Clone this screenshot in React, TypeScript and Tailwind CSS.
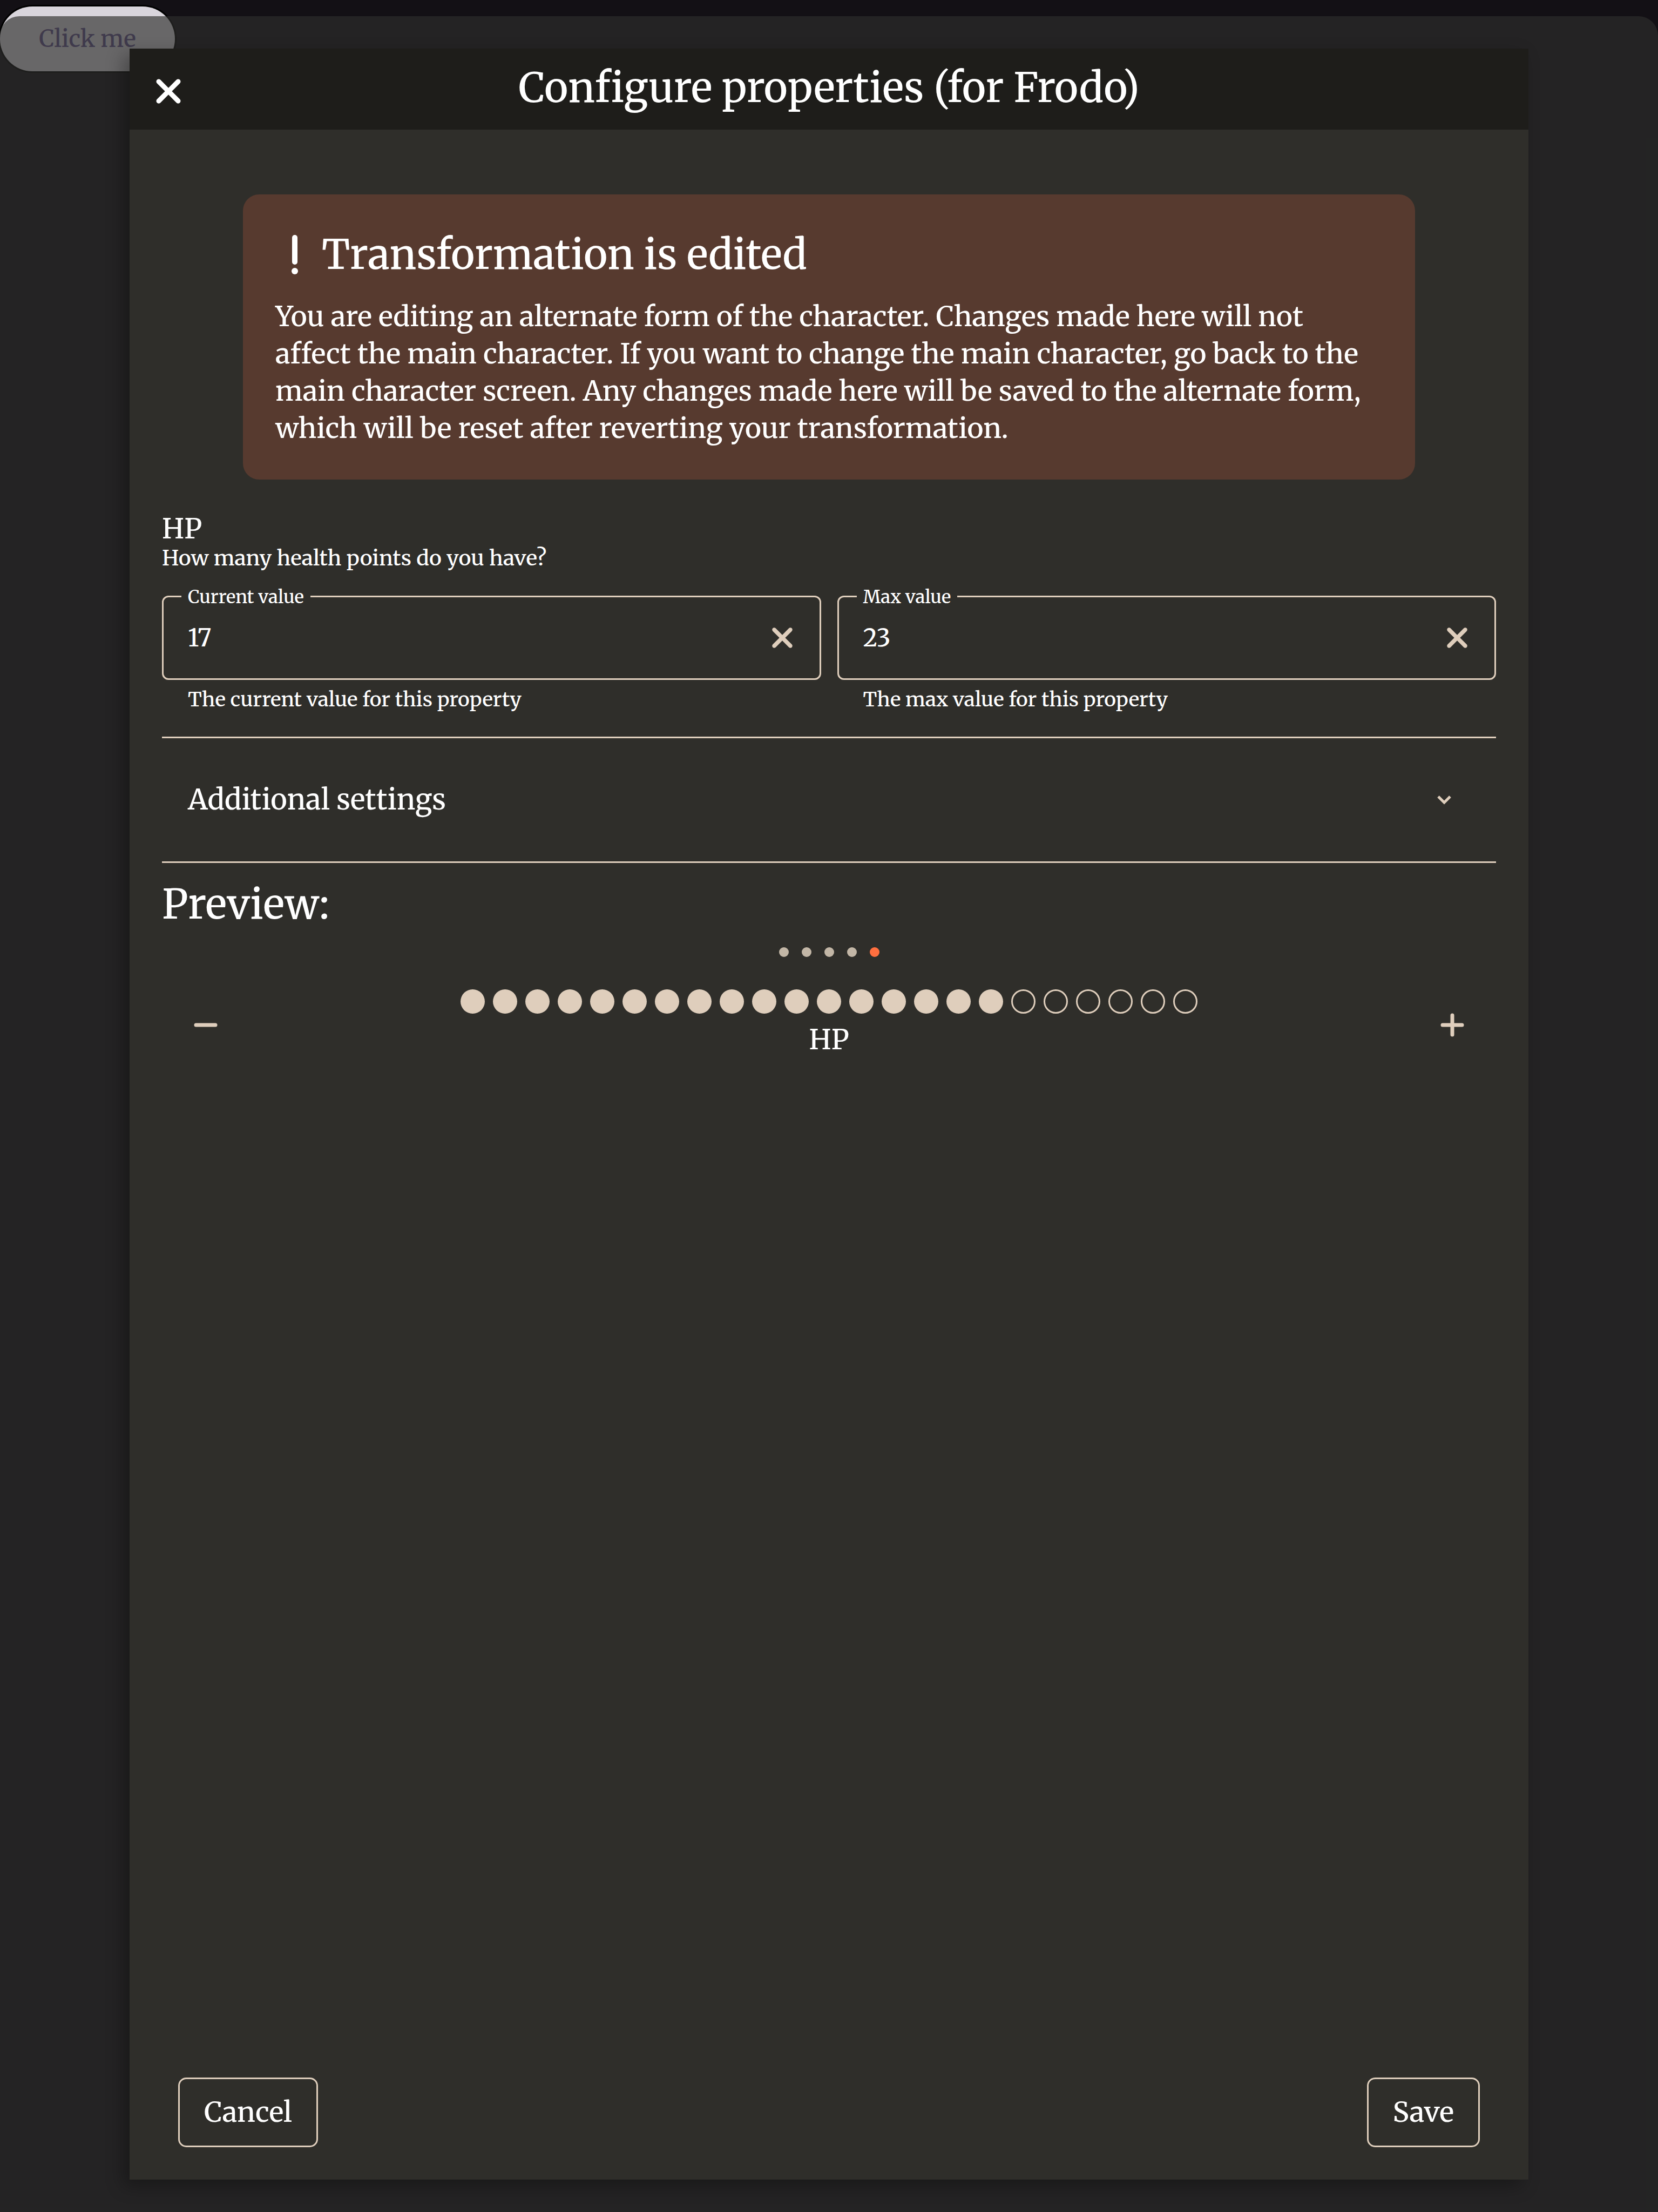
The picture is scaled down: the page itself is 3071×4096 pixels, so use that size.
import { useState } from "react";
import { FaXmark } from "react-icons/fa6";

function ExclamationIcon() {
  return (
    <svg width="12" height="73" viewBox="0 0 12 73" fill="currentColor" aria-hidden="true">
      <rect x="1" y="0" width="10" height="55" rx="5" />
      <circle cx="6" cy="67" r="6" />
    </svg>
  );
}

function ChevronDownIcon() {
  return (
    <svg width="26" height="18" viewBox="0 0 26 18" fill="none" stroke="currentColor" strokeWidth="5" aria-hidden="true">
      <path d="M2 3L13 14L24 3" />
    </svg>
  );
}

function MinusIcon() {
  return (
    <svg width="44" height="44" viewBox="0 0 44 44" stroke="currentColor" strokeWidth="7" strokeLinecap="round" aria-hidden="true">
      <path d="M4 22H40" />
    </svg>
  );
}

function PlusIcon() {
  return (
    <svg width="44" height="44" viewBox="0 0 44 44" stroke="currentColor" strokeWidth="7" strokeLinecap="round" aria-hidden="true">
      <path d="M4 22H40M22 4V40" />
    </svg>
  );
}

interface NumberFieldProps {
  id: string;
  label: string;
  helper: string;
  value: string;
  onChange: (value: string) => void;
}

function NumberField({ id, label, helper, value, onChange }: NumberFieldProps) {
  return (
    <div>
      <div className="relative flex h-[156px] items-center rounded-xl border-3 border-[#dfcebc] pr-[21px] pl-[45px]">
        <label htmlFor={id} className="absolute top-0 left-[33px] -translate-y-1/2 bg-[#2f2e2a] px-3 text-[33px] leading-[42px]">
          {label}
        </label>
        <input
          id={id}
          type="text"
          inputMode="numeric"
          aria-describedby={`${id}-helper`}
          value={value}
          onChange={(e) => onChange(e.target.value)}
          className="h-24 min-w-0 flex-1 bg-transparent text-[45px] text-white outline-none"
        />
        <button
          type="button"
          aria-label={`Clear ${label.toLowerCase()}`}
          onClick={() => onChange("")}
          className="flex size-24 shrink-0 items-center justify-center text-[60px] text-[#dfcebc]"
        >
          <FaXmark />
        </button>
      </div>
      <p id={`${id}-helper`} className="mt-3 pl-12 text-[37px] leading-[48px]">
        {helper}
      </p>
    </div>
  );
}

const pages = [0, 1, 2, 3, 4];

export default function App() {
  const [current, setCurrent] = useState("17");
  const [max, setMax] = useState("23");
  const [open, setOpen] = useState(false);
  const filled = Number(current) || 0;
  const total = Math.min(Number(max) || 0, 60);
  const step = (by: number) => setCurrent(String(Math.min(total, Math.max(0, filled + by))));

  return (
    <div className="relative min-h-screen bg-[#131015] pt-3 font-['Merriweather','Noto_Serif',serif] font-medium text-white">
      <button
        type="button"
        className="flex h-[120px] w-[324px] items-center justify-center rounded-full bg-[#d9d5dc] text-[43px] text-[#625389] ring-3 ring-black"
      >
        Click me
      </button>

      <div className="absolute inset-x-0 top-[30px] bottom-0 flex rounded-t-[36px] bg-[#2d2e2c]/66 px-60 py-15">
        <div
          role="dialog"
          aria-labelledby="dialog-title"
          className="flex flex-1 flex-col bg-[#2f2e2a] shadow-[-12px_12px_30px_rgba(0,0,0,0.3)]"
        >
          <header className="grid h-[150px] grid-cols-[96px_1fr_96px] items-center bg-[#1e1d1a] px-6">
            <button type="button" aria-label="Close" className="mt-2 flex size-24 items-center justify-center text-[72px]">
              <FaXmark />
            </button>
            <h1 id="dialog-title" className="pb-1.5 text-center text-[75px] leading-[96px]">
              Configure properties (for Frodo)
            </h1>
          </header>

          <main className="flex-1 px-15 pt-30">
            <section className="mx-[150px] rounded-[30px] bg-[#573a2f] p-15">
              <h2 className="flex items-center gap-3.5 text-[75px] leading-[102px]">
                <span className="flex w-[72px] justify-center">
                  <ExclamationIcon />
                </span>
                Transformation is edited
              </h2>
              <p className="mt-[30px] pr-6 text-[51px] leading-[69px]">
                You are editing an alternate form of the character. Changes made here will not affect the main character. If
                you want to change the main character, go back to the main character screen. Any changes made here will be
                saved to the alternate form, which will be reset after reverting your transformation.
              </p>
            </section>

            <section className="mt-15">
              <h3 className="text-[51px] leading-[62px]">HP</h3>
              <p className="text-[39px] leading-[48px]">How many health points do you have?</p>
              <div className="mt-[45px] grid grid-cols-2 gap-[30px]">
                <NumberField
                  id="current-value"
                  label="Current value"
                  helper="The current value for this property"
                  value={current}
                  onChange={setCurrent}
                />
                <NumberField
                  id="max-value"
                  label="Max value"
                  helper="The max value for this property"
                  value={max}
                  onChange={setMax}
                />
              </div>
            </section>

            <button
              type="button"
              aria-expanded={open}
              onClick={() => setOpen(!open)}
              className="mt-[45px] flex h-[234px] w-full items-center justify-between border-y-3 border-[#dfcebc] pr-15 pl-12 text-[52px]"
            >
              Additional settings
              <span className="flex w-[72px] justify-center text-[#dfcebc]">
                <ChevronDownIcon />
              </span>
            </button>

            <section className="mt-7">
              <h2 className="text-[75px] leading-[96px]">Preview:</h2>
              <div className="mt-8 flex justify-center gap-6">
                {pages.map((page) => (
                  <span
                    key={page}
                    className={page === 4 ? "size-[18px] rounded-full bg-[#ff6f3f]" : "size-[18px] rounded-full bg-[#c2b6a6]"}
                  />
                ))}
              </div>
              <div className="mt-15 flex items-center justify-between px-[33px] text-[#dfcebc]">
                <button type="button" aria-label="Decrease HP" onClick={() => step(-1)} className="flex size-24 items-center justify-center">
                  <MinusIcon />
                </button>
                <div className="pb-1.5">
                  <div className="flex flex-wrap justify-center gap-[15px]">
                    {Array.from({ length: total }, (_, i) => (
                      <span
                        key={i}
                        className={
                          i < filled
                            ? "size-[45px] rounded-full bg-[#dfcebc]"
                            : "size-[45px] rounded-full border-3 border-[#dfcebc]"
                        }
                      />
                    ))}
                  </div>
                  <p className="mt-4 text-center text-[51px] leading-[64px] text-white">HP</p>
                </div>
                <button type="button" aria-label="Increase HP" onClick={() => step(1)} className="flex size-24 items-center justify-center">
                  <PlusIcon />
                </button>
              </div>
            </section>
          </main>

          <footer className="flex justify-between px-[90px] pb-15">
            <button type="button" className="h-[129px] rounded-[15px] border-3 border-[#dfcebc] px-[45px] text-[51px]">
              Cancel
            </button>
            <button type="button" className="h-[129px] rounded-[15px] border-3 border-[#dfcebc] px-[45px] text-[51px]">
              Save
            </button>
          </footer>
        </div>
      </div>
    </div>
  );
}
